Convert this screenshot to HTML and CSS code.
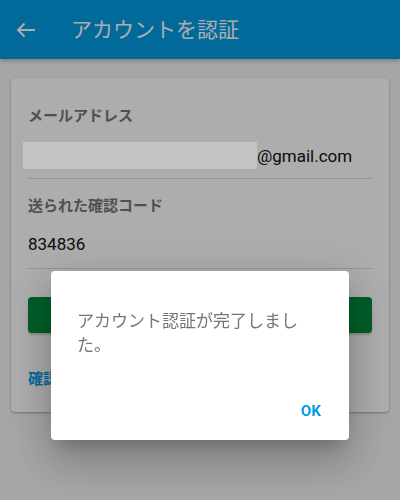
FILE: index.html
```html
<html lang="ja">

<head>
    <meta charset="UTF-8">
    <meta name="viewport" content="width=device-width, initial-scale=1.0">
    <title>アカウントを認証</title>
    <link rel="stylesheet" href="styles.css">
</head>

<body>
    <header class="appbar">
        <svg class="back-icon" width="20" height="16" viewBox="0 0 20 16">
            <path d="M19 8H2M8.5 1.5L2 8l6.5 6.5" fill="none" stroke="#fff" stroke-width="2"/>
        </svg>
        <div class="appbar-title">アカウントを認証</div>
    </header>

    <main class="content">
        <div class="card">
            <div class="field-label first">メールアドレス</div>
            <div class="field-value email-row">
                <span class="redacted"></span><span>@gmail.com</span>
            </div>

            <div class="field-label">送られた確認コード</div>
            <div class="field-value code-row">834836</div>

            <div class="submit-btn"></div>

            <div class="resend-link">確認コードを再送信</div>
        </div>
    </main>

    <div class="overlay">
        <div class="dialog">
            <p class="dialog-text">アカウント認証が完了しました。</p>
            <div class="dialog-actions">
                <div class="dialog-btn">OK</div>
            </div>
        </div>
    </div>
</body>

</html>
```

FILE: styles.css
```css
html,
body {
    width: 100%;
    height: 100%;
    padding: 0;
    margin: 0;
    background-color: #f5f5f5;
    font-family: Roboto, "Noto Sans CJK JP", sans-serif;
    overflow: hidden;
}

.appbar {
    height: 59px;
    display: flex;
    align-items: center;
    padding-left: 16px;
    background-color: #039be5;
    color: #fff;
    box-shadow: 0 2px 4px rgba(0, 0, 0, 0.25);
    box-sizing: border-box;
}

.back-icon {
    flex: none;
}

.appbar-title {
    margin-left: 35px;
    font-size: 21px;
    line-height: 28px;
}

.content {
    padding: 19px 11px 0 11px;
}

.card {
    background-color: #fff;
    border-radius: 4px;
    box-shadow: 0 1px 3px rgba(0, 0, 0, 0.2), 0 1px 2px rgba(0, 0, 0, 0.14);
    padding: 28px 17px 23px 17px;
}

.field-label {
    margin-top: 17px;
    font-size: 15px;
    line-height: 20px;
    font-weight: 700;
    color: #777;
}

.field-label.first {
    margin-top: 0;
}

.field-value {
    display: flex;
    align-items: center;
    height: 27px;
    font-size: 17px;
    color: #111;
    border-bottom: 1px solid #ddd;
}

.email-row {
    margin-top: 16px;
    padding-bottom: 9px;
}

.code-row {
    margin-top: 14px;
    padding-bottom: 11px;
}

.redacted {
    position: relative;
    z-index: 20;
    width: 234px;
    height: 27px;
    margin-left: -5px;
    background-color: #c4c4c4;
}

.submit-btn {
    margin-top: 28px;
    height: 36px;
    border-radius: 4px;
    background-color: #008c3b;
    box-shadow: 0 2px 2px rgba(0, 0, 0, 0.2);
}

.resend-link {
    margin-top: 36px;
    font-size: 15px;
    line-height: 20px;
    font-weight: 700;
    color: #039be5;
}

.overlay {
    position: fixed;
    top: 0;
    left: 0;
    right: 0;
    bottom: 0;
    z-index: 10;
    display: flex;
    flex-direction: column;
    align-items: center;
    padding-top: 271px;
    background-color: rgba(0, 0, 0, 0.32);
    box-sizing: border-box;
}

.dialog {
    width: 298px;
    height: 169px;
    padding: 38px 0 0 26px;
    background-color: #fff;
    border-radius: 4px;
    box-sizing: border-box;
    box-shadow: 0 11px 15px -7px rgba(0, 0, 0, 0.2), 0 24px 38px 3px rgba(0, 0, 0, 0.14), 0 9px 46px 8px rgba(0, 0, 0, 0.12);
}

.dialog-text {
    width: 230px;
    margin: 0;
    font-size: 17px;
    line-height: 24px;
    color: #757575;
}

.dialog-actions {
    display: flex;
    justify-content: flex-end;
    margin-top: 36px;
    padding-right: 20px;
}

.dialog-btn {
    height: 36px;
    line-height: 36px;
    padding: 0 8px;
    font-size: 15px;
    font-weight: 700;
    color: #039be5;
}
```
